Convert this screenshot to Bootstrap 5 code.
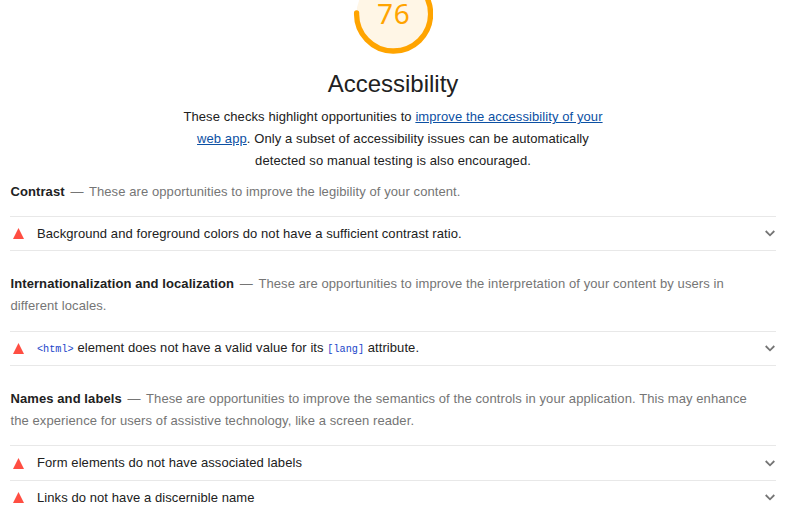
<!DOCTYPE html>
<html lang="en">
<head>
<meta charset="utf-8">
<meta name="viewport" content="width=device-width, initial-scale=1">
<title>Accessibility</title>
<link href="https://cdn.jsdelivr.net/npm/bootstrap@5.3.0/dist/css/bootstrap.min.css" rel="stylesheet">
<style>
body{font-family:"Liberation Sans",Arial,sans-serif;font-size:13px;line-height:22px;color:#212121;background:#fff;overflow:hidden}
.report{padding:0 11px 0 10px}
.gauge{height:54px}
.gauge svg{display:block;width:80px;height:54px}
.gauge text{font-family:"Noto Sans","Open Sans",sans-serif;font-size:28px;letter-spacing:.8px;fill:#ffa400}
.title{font-size:24px;line-height:30px;margin:15px 0 7px;font-weight:400;color:#212121}
.intro{width:440px;letter-spacing:.09px}
.intro a{color:#0c50a3}
.group-head{color:#757575;letter-spacing:.09px;padding:0 20px 0 .5px}
.group-head b{color:#212121}
.group-head span{margin:0 2px}
.audit{height:35px;margin-bottom:-1px;border:1px solid #e8e8e8;border-width:1px 0;padding:0 1.5px 0 3px;letter-spacing:.08px}
.audit.tall{height:36px}
.audit code{font-family:"Liberation Mono",monospace;font-size:10.2px;color:#1a45c9;letter-spacing:0}
.label{margin-left:13px}
.g1{margin-top:9px}.g2{margin-top:23px}
.rows{padding-top:13px}
.g2 .rows.late{padding-top:14px}
</style>
</head>
<body>
<main class="report">
  <header class="d-flex flex-column align-items-center text-center">
    <div class="gauge"><svg viewBox="0 0 80 54"><circle cx="40.5" cy="14" r="37" fill="#fff6e6"/><path d="M40.5-23A37 37 0 1 1 3.6 13" fill="none" stroke="#ffa400" stroke-width="5.3" stroke-linecap="round"/><text x="40.7" y="24" text-anchor="middle">76</text></svg></div>
    <h1 class="title">Accessibility</h1>
    <p class="intro mb-0">These checks highlight opportunities to <a href="#">improve the accessibility of your web app</a>. Only a subset of accessibility issues can be automatically detected so manual testing is also encouraged.</p>
  </header>
  <section class="g1">
    <div class="group-head"><b>Contrast</b> <span>—</span> These are opportunities to improve the legibility of your content.</div>
    <div class="rows">
      <div class="audit d-flex align-items-center"><svg width="11" height="11"><path d="M5.5 0L11 11H0z" fill="#ff4e42"/></svg><div class="label">Background and foreground colors do not have a sufficient contrast ratio.</div><svg class="ms-auto" width="10" height="7"><path d="M.7 1L5 5.3 9.3 1" fill="none" stroke="#757575" stroke-width="1.8"/></svg></div>
    </div>
  </section>
  <section class="g2">
    <div class="group-head"><b>Internationalization and localization</b> <span>—</span> These are opportunities to improve the interpretation of your content by users in different locales.</div>
    <div class="rows late">
      <div class="audit d-flex align-items-center"><svg width="11" height="11"><path d="M5.5 0L11 11H0z" fill="#ff4e42"/></svg><div class="label"><code>&lt;html&gt;</code> element does not have a valid value for its <code>[lang]</code> attribute.</div><svg class="ms-auto" width="10" height="7"><path d="M.7 1L5 5.3 9.3 1" fill="none" stroke="#757575" stroke-width="1.8"/></svg></div>
    </div>
  </section>
  <section class="g2">
    <div class="group-head"><b>Names and labels</b> <span>—</span> These are opportunities to improve the semantics of the controls in your application. This may enhance the experience for users of assistive technology, like a screen reader.</div>
    <div class="rows">
      <div class="audit tall d-flex align-items-center"><svg width="11" height="11"><path d="M5.5 0L11 11H0z" fill="#ff4e42"/></svg><div class="label">Form elements do not have associated labels</div><svg class="ms-auto" width="10" height="7"><path d="M.7 1L5 5.3 9.3 1" fill="none" stroke="#757575" stroke-width="1.8"/></svg></div>
      <div class="audit d-flex align-items-center"><svg width="11" height="11"><path d="M5.5 0L11 11H0z" fill="#ff4e42"/></svg><div class="label">Links do not have a discernible name</div><svg class="ms-auto" width="10" height="7"><path d="M.7 1L5 5.3 9.3 1" fill="none" stroke="#757575" stroke-width="1.8"/></svg></div>
    </div>
  </section>
</main>
<script src="https://cdn.jsdelivr.net/npm/bootstrap@5.3.0/dist/js/bootstrap.bundle.min.js"></script>
</body>
</html>
